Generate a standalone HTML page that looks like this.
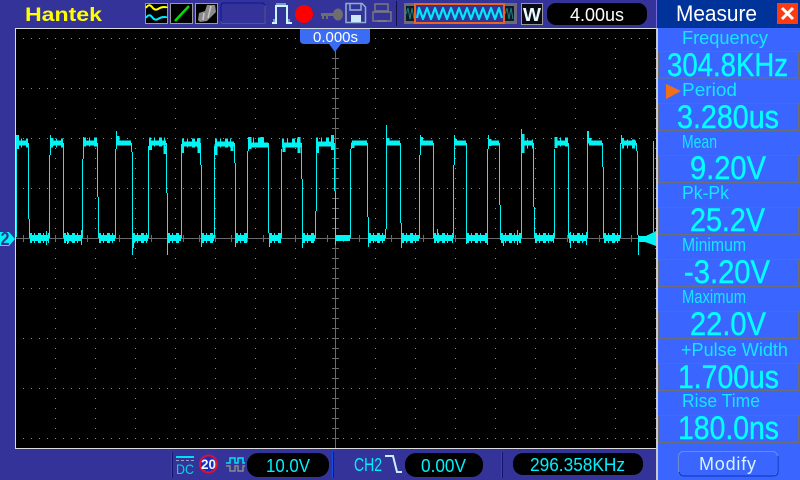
<!DOCTYPE html>
<html><head><meta charset="utf-8"><style>
html,body{margin:0;padding:0;background:#333399}
svg{display:block}
text{font-family:"Liberation Sans",sans-serif}
.l{font-size:18px;fill:#14e6ff}
.v{font-size:32px;fill:#00ffff;stroke:#00ffff;stroke-width:.4px}
.c{fill:#00f0ff;font-size:18px}
</style></head><body>
<svg width="800" height="480" viewBox="0 0 800 480" xmlns="http://www.w3.org/2000/svg">
<rect width="800" height="480" fill="#333399"/>
<!-- graticule -->
<rect x="15.500" y="28.500" width="641" height="420" fill="#000" stroke="#dcdcdc"/>
<g shape-rendering="crispEdges" fill="none" stroke="#8a8a8a" stroke-width="1">
<path stroke-dasharray="1 7" d="M23 38.500H652M23 88.500H652M23 138.500H652M23 188.500H652M23 288.500H652M23 338.500H652M23 388.500H652M23 438.500H652"/>
<path stroke-dasharray="1 9" d="M55.500 48V440M95.500 48V440M135.500 48V440M175.500 48V440M215.500 48V440M255.500 48V440M295.500 48V440M375.500 48V440M415.500 48V440M455.500 48V440M495.500 48V440M535.500 48V440M575.500 48V440M615.500 48V440M655.500 48V440"/>
</g>
<g shape-rendering="crispEdges" fill="none" stroke="#6a6a6a">
<path d="M16 238.500H656M335.500 50V448"/>
<path stroke-width="7" stroke-dasharray="1 15" d="M23 238.500H650"/>
<path stroke-width="7" stroke-dasharray="1 9" d="M335.500 58V440"/>
</g>
<!-- waveform -->
<g shape-rendering="crispEdges" fill="none" stroke="#00f4f4">
<path stroke-width="1.200" d="M16.500 237V137
M28.500 143V219M29.500 219V238
M49.500 238V155M50.500 155V135M63.500 143V238
M82.500 238V159M83.500 159V137M97.500 143V197M98.500 197V238
M115.500 238V149M116.500 149V131M131.500 143V152M132.500 152V255
M148.500 238V146M166.500 143V193M167.500 193V255
M181.500 238V146M200.500 143V165M201.500 165V247
M214.500 238V146M234.500 143V163M235.500 163V247
M247.500 238V151M248.500 151V137M268.500 143V233M269.500 233V247
M281.500 238V149M301.500 143V179M302.500 179V248
M315.500 238V211M316.500 211V144M334.500 143V191M335.500 191V245
M350.500 238V149M351.500 149V143M367.500 143V217M368.500 217V247
M385.500 238V229M386.500 229V125M400.500 143V223M401.500 223V238
M419.500 238V155M420.500 155V135M433.500 143V238
M453.500 238V165M454.500 165V135M466.500 143V235
M487.500 238V149M488.500 149V135M499.500 143V205M500.500 205V240
M521.500 238V129M533.500 143V207M534.500 207V238
M554.500 238V149M568.500 143V238
M587.500 238V131M588.500 131V143M602.500 143V167M603.500 167V238
M620.500 238V143M621.500 143V135M636.500 143V151M637.500 151V235M638.500 235V255
M653.500 232V141"/>
<!-- top band -->
<path stroke-width="5" d="M16 143H28M51 143H63M84 143H97M117 143H131M149 143H166M182 144H200M215 144H234M248 145H268M282 145H301M316 144H334M352 143H367M387 143H400M421 143H433M455 143H466M489 143H499M522 143H533M555 143H568M589 143H602M622 143H636"/>
<path stroke-width="9" stroke-dasharray="2 3 1 4 3 2 1 5" d="M16 143H28M51 143H63M84 142H97M149 142H166M182 143H200M215 143H234M248 142H268M282 143H301M316 142H334M522 144H533M555 142H568M622 144H636"/>
<path stroke-width="3" d="M17.500 135V149M52 138V146M118 136V144M150.500 141V150M165 146V154M182.500 144V153M199 138V153M216 144V155M232 143V151M250 137V149M262 137V147M284 144V152M299 137V153M317.500 146V153M332.500 135V150M353 142V148M388 138V144M421.500 137V144M455.500 139V144M490 139V146M523 134V153M556 137V148M590 138V144M622.500 138V144"/>
<!-- bottom band -->
<path stroke-width="6" d="M30 238H49M64 238H82M99 238H115M133 238H148M168 238H181M202 238H214M236 238H247M270 238H281M303 238H315M336 238H350M369 238H385M402 238H419M434 238H453M467 238H487M501 238H521M535 238H554M569 238H587M604 238H620M639 239H653"/>
<path stroke-width="10" stroke-dasharray="2 2 1 3 3 2 1 4" d="M30 238H49M64 238H82M99 238H115M133 238H148M168 238H181M202 238H214M236 238H247M270 238H281M303 238H315M369 238H385M402 238H419M434 238H453M467 238H487M501 238H521M535 238H554M569 238H587M604 238H620"/>
<path stroke-width="1.200" d="M46.500 231V245M67.500 232V244M81.500 230V245M133.500 240V248M401.500 238V248M466.500 231V244M487.500 232V245M437.500 229V243M517.500 230V245M503.500 240V246M570.500 232V248M586.500 232V245"/>
</g>
<!-- right trigger marker -->
<path d="M638 240L656 231V246L648 243Z" fill="#00f4f4"/>
<!-- left ch marker -->
<path d="M0 232H9L15 239L9 246H0Z" fill="#00f4f4"/>
<text x="0.500" y="245" font-size="18" font-weight="bold" fill="#333399" textLength="9" lengthAdjust="spacingAndGlyphs">2</text>
<!-- time tab -->
<path d="M300 29H370V40Q370 44 366 44H341L335 52L329 44H304Q300 44 300 40Z" fill="#3a6cf4"/>
<text x="313" y="42" font-size="15" fill="#fff" textLength="45" lengthAdjust="spacingAndGlyphs">0.000s</text>
<!-- top bar -->
<text x="25" y="21" font-size="19.500" font-weight="bold" fill="#ffff00" textLength="77" lengthAdjust="spacingAndGlyphs">Hantek</text>
<g shape-rendering="crispEdges">
<rect x="145.500" y="3.500" width="22" height="20" fill="#000" stroke="#9a9a9a"/>
<rect x="170.500" y="3.500" width="22" height="20" fill="#000" stroke="#9a9a9a"/>
<rect x="195.500" y="3.500" width="22" height="20" fill="#000" stroke="#9a9a9a"/>
</g>
<path d="M146 8Q149 3 152 7T158 9T164 7T167 8" fill="none" stroke="#ffff00" stroke-width="2"/>
<path d="M146 18Q149 13 152 17T158 19T164 17T167 18" fill="none" stroke="#00e8ff" stroke-width="2"/>
<path d="M175 21L189 6" stroke="#00e000" stroke-width="2.500"/>
<path d="M198 20L199 13L205 11L207 5H215L216 12L211 17L207 21L200 22Z" fill="#8a8a8a"/>
<path d="M203 20L204 13M208 18L211 6" stroke="#c8c8c8" stroke-width="1.500" fill="none"/>
<rect x="221" y="3" width="44" height="21" rx="3" fill="#333399"/>
<path d="M221 21V6Q221 3 224 3H263L265 5" fill="none" stroke="#0b159f"/>
<path d="M221 22Q221 23.500 223 23.500H265V6" fill="none" stroke="#55557f"/>
<path d="M272 23H276V6H287V23H292" fill="none" stroke="#c8f6ff" stroke-width="2"/>
<path d="M277 3V6M279 3V6M281 3V6M283 3V6M285 3V6M274 19V22M289 19V22" stroke="#c8f6ff"/>
<circle cx="304" cy="14" r="9" fill="#ff0000"/>
<g fill="#6e6e6e"><rect x="321" y="13" width="15" height="3"/><rect x="322" y="16" width="2" height="3"/><rect x="326" y="16" width="2" height="3"/><ellipse cx="338" cy="14.500" rx="5" ry="6"/></g>
<path d="M346 3.500H362L365.500 7V22.500H346Z" fill="none" stroke="#8fb0d0" stroke-width="1.500"/>
<path d="M350 4V10H361V4" fill="none" stroke="#8fb0d0" stroke-width="1.500"/>
<rect x="351" y="15" width="10" height="7" fill="#cfe6f4"/>
<path d="M375 4H388V11H375ZM373 12H391V21H373Z" fill="none" stroke="#7a7a80" stroke-width="1.500"/>
<path d="M377 21H387" stroke="#7a7a80" stroke-width="2"/>
<path d="M396.500 1V26" stroke="#111144" stroke-width="1"/>
<rect x="404" y="3" width="113" height="21" fill="#6a6a7c"/>
<rect x="406" y="6" width="108" height="15" fill="#0c1a22"/>
<path d="M406 14L408 8L410 19L412 8L414 19M505 14L507 8L509 19L511 8L513 19" fill="none" stroke="#1f7f85"/>
<rect x="415" y="4" width="89" height="19" fill="#333399" stroke="#e8651a" stroke-width="2"/>
<path d="M417 18L419 8L423 19L427 8L431 19L435 8L439 19L443 8L447 19L451 8L455 19L459 8L463 19L467 8L471 19L475 8L479 19L483 8L487 19L491 8L495 19L499 8L502 18" fill="none" stroke="#00e8f4" stroke-width="2.200" stroke-linejoin="round"/>
<rect x="521.500" y="3.500" width="21" height="21" fill="#0a0a14" stroke="#9a9a9a"/>
<text x="523" y="21" font-size="18" font-weight="bold" fill="#e8fbff" textLength="18" lengthAdjust="spacingAndGlyphs">W</text>
<rect x="547" y="3" width="100" height="22" rx="9" fill="#000"/>
<text x="570" y="21" font-size="18" fill="#fff" textLength="54" lengthAdjust="spacingAndGlyphs">4.00us</text>
<!-- right panel -->
<rect x="656" y="0" width="144" height="480" fill="#3a66ff"/>
<rect x="656" y="28" width="2" height="452" fill="#c8c8d0"/>
<rect x="656" y="0" width="1" height="28" fill="#7a6ce0"/>
<rect x="657" y="0" width="143" height="28" fill="#003399"/>
<text x="676" y="21" font-size="22" fill="#fff" textLength="81" lengthAdjust="spacingAndGlyphs">Measure</text>
<rect x="777" y="3" width="21" height="21" fill="#ff3a10"/>
<path d="M782 8L793 19M793 8L782 19" stroke="#fff" stroke-width="3"/>
<g fill="none" stroke="#6e6e78" shape-rendering="crispEdges">
<rect x="658.500" y="51.500" width="140" height="26.500"/>
<rect x="658.500" y="103.500" width="140" height="27"/>
<rect x="658.500" y="155.500" width="140" height="27"/>
<rect x="658.500" y="207.500" width="140" height="27"/>
<rect x="658.500" y="259.500" width="140" height="27"/>
<rect x="658.500" y="311.500" width="140" height="27"/>
<rect x="658.500" y="363.500" width="140" height="27"/>
<rect x="658.500" y="415.500" width="140" height="27"/>
</g>
<text class="l" x="682" y="44" textLength="86" lengthAdjust="spacingAndGlyphs">Frequency</text>
<path d="M666 84L681 91L666 99Z" fill="#f0701a"/>
<text class="l" x="682" y="96" textLength="55" lengthAdjust="spacingAndGlyphs">Period</text>
<text class="l" x="682" y="148" textLength="35" lengthAdjust="spacingAndGlyphs">Mean</text>
<text class="l" x="682" y="199" textLength="47" lengthAdjust="spacingAndGlyphs">Pk-Pk</text>
<text class="l" x="682" y="251" textLength="64" lengthAdjust="spacingAndGlyphs">Minimum</text>
<text class="l" x="682" y="303" textLength="64" lengthAdjust="spacingAndGlyphs">Maximum</text>
<text class="l" x="681" y="356" textLength="107" lengthAdjust="spacingAndGlyphs">+Pulse Width</text>
<text class="l" x="682" y="407" textLength="78" lengthAdjust="spacingAndGlyphs">Rise Time</text>
<text class="v" x="667" y="76" textLength="121" lengthAdjust="spacingAndGlyphs">304.8KHz</text>
<text class="v" x="677" y="128" textLength="102" lengthAdjust="spacingAndGlyphs">3.280us</text>
<text class="v" x="690" y="179" textLength="76" lengthAdjust="spacingAndGlyphs">9.20V</text>
<text class="v" x="690" y="231" textLength="75" lengthAdjust="spacingAndGlyphs">25.2V</text>
<text class="v" x="684" y="283" textLength="86" lengthAdjust="spacingAndGlyphs">-3.20V</text>
<text class="v" x="690" y="335" textLength="76" lengthAdjust="spacingAndGlyphs">22.0V</text>
<text class="v" x="678" y="388" textLength="101" lengthAdjust="spacingAndGlyphs">1.700us</text>
<text class="v" x="678" y="439" textLength="101" lengthAdjust="spacingAndGlyphs">180.0ns</text>
<rect x="678.500" y="451.500" width="99" height="24.500" rx="5" fill="#3a66ff" stroke="#6f8ad8"/>
<path d="M679 472Q680 476 684 476H773Q778 476 778 471V456" fill="none" stroke="#0a30b0"/>
<text x="699" y="470" font-size="18" fill="#d4f4ff" textLength="57">Modify</text>
<!-- bottom bar -->
<g shape-rendering="crispEdges">
<path d="M171.500 452V478M332.500 452V478M501.500 452V478" stroke="#0a50f0"/>
<path d="M172.500 452V478M333.500 452V478M502.500 452V478" stroke="#14146e"/>
<rect x="176" y="456" width="18" height="2" fill="#00e0f0"/>
<path d="M176 460.500H194" stroke="#9aa0c0" stroke-dasharray="3 2"/>
</g>
<text x="176" y="474" font-size="14" fill="#00d8e0" textLength="18" lengthAdjust="spacingAndGlyphs">DC</text>
<circle cx="208.500" cy="464" r="8.500" fill="#1c2cc0" stroke="#e01030" stroke-width="2"/>
<text x="201" y="469" font-size="13.500" font-weight="bold" fill="#e8f6ff" textLength="15" lengthAdjust="spacingAndGlyphs">20</text>
<path d="M226 463H230V458H235V463H238V458H243V463H245" fill="none" stroke="#00e4f0" stroke-width="1.500"/>
<path d="M226 466H230V471H235V466H238V471H243V466H245" fill="none" stroke="#8a8a8a" stroke-width="1.500"/>
<rect x="247" y="453" width="82" height="24" rx="11" fill="#000"/>
<text class="c" x="266" y="472" textLength="44" lengthAdjust="spacingAndGlyphs">10.0V</text>
<text x="354" y="471" font-size="18" fill="#00f0ff" textLength="28" lengthAdjust="spacingAndGlyphs">CH2</text>
<path d="M385 456H393L397 472H402" fill="none" stroke="#c8f0ff" stroke-width="2"/>
<rect x="405" y="453" width="78" height="24" rx="11" fill="#000"/>
<text class="c" x="421" y="472" textLength="45" lengthAdjust="spacingAndGlyphs">0.00V</text>
<rect x="513" y="453" width="130" height="22" rx="10" fill="#000"/>
<text class="c" x="530" y="471" textLength="95" lengthAdjust="spacingAndGlyphs">296.358KHz</text>
</svg>
</body></html>
